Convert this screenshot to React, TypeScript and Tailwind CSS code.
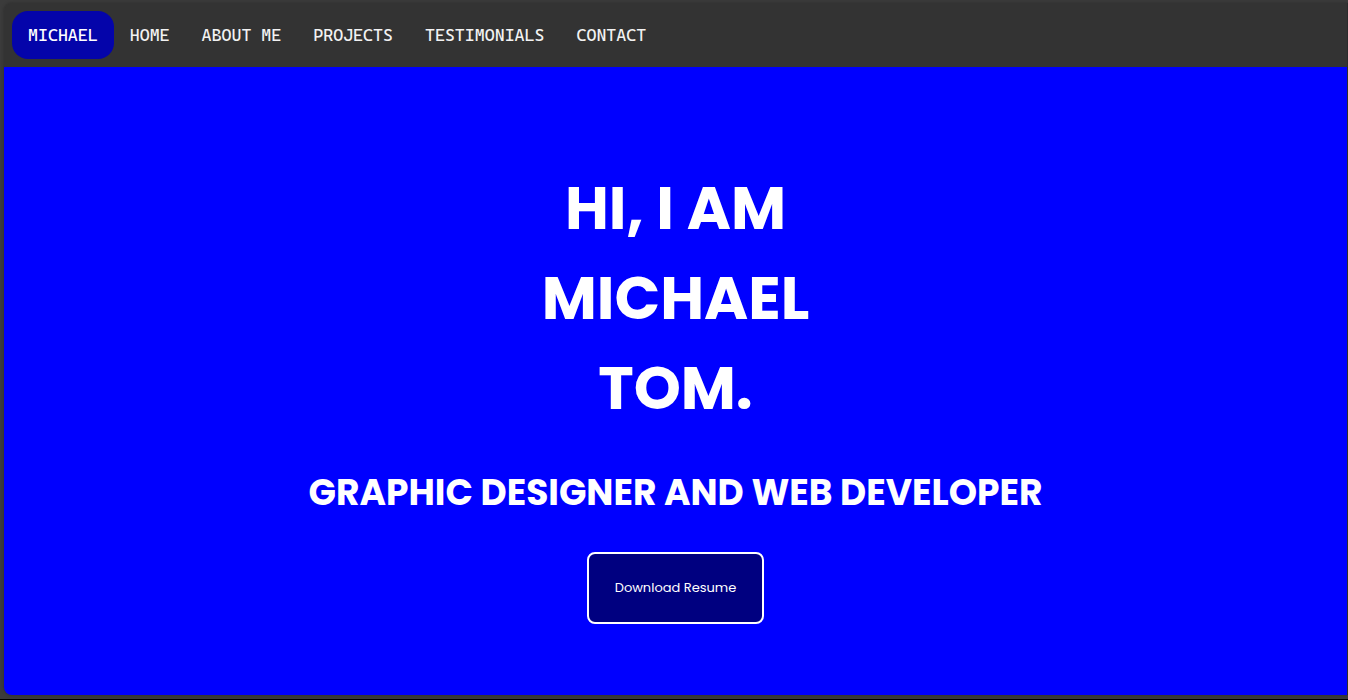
const links = [
  { label: "HOME", href: "#home" },
  { label: "ABOUT ME", href: "#about" },
  { label: "PROJECTS", href: "#projects" },
  { label: "TESTIMONIALS", href: "#testimonials" },
  { label: "CONTACT", href: "#contact" },
];

function NavBar() {
  return (
    <nav className="flex h-16 items-center bg-[#333333] pl-2 font-['Cascadia_Mono','DejaVu_Sans_Mono',monospace] text-[17px] leading-6 font-medium text-[#f2f2f2]">
      <a href="#home" className="rounded-2xl bg-[#0404aa] px-4 py-3 text-white">
        MICHAEL
      </a>
      {links.map((link) => (
        <a key={link.label} href={link.href} className="px-4 py-3">
          {link.label}
        </a>
      ))}
    </nav>
  );
}

function Hero() {
  return (
    <main
      id="home"
      className="flex flex-1 flex-col items-center bg-[#0000ff] pt-24 text-center font-['Poppins','Inter',sans-serif] text-white"
    >
      <h1 className="text-[60px] leading-[90px] font-bold">
        HI, I AM
        <br />
        MICHAEL
        <br />
        TOM.
      </h1>
      <h2 className="mt-[33px] text-[36px] leading-[54px] font-bold">GRAPHIC DESIGNER AND WEB DEVELOPER</h2>
      <button
        type="button"
        className="mt-8 rounded-lg border-2 border-white bg-[#000080] px-[26px] py-6 text-[13px] leading-5"
      >
        Download Resume
      </button>
    </main>
  );
}

export default function App() {
  return (
    <div className="flex min-h-screen flex-col border-b border-black bg-[#3b3b3b] pt-[3px] pb-1 pl-1">
      <div className="flex flex-1 flex-col overflow-hidden rounded-l-lg border-r border-[#2b2b2b] shadow-[0_0_3px_#2b2b2b]">
        <NavBar />
        <Hero />
      </div>
    </div>
  );
}
